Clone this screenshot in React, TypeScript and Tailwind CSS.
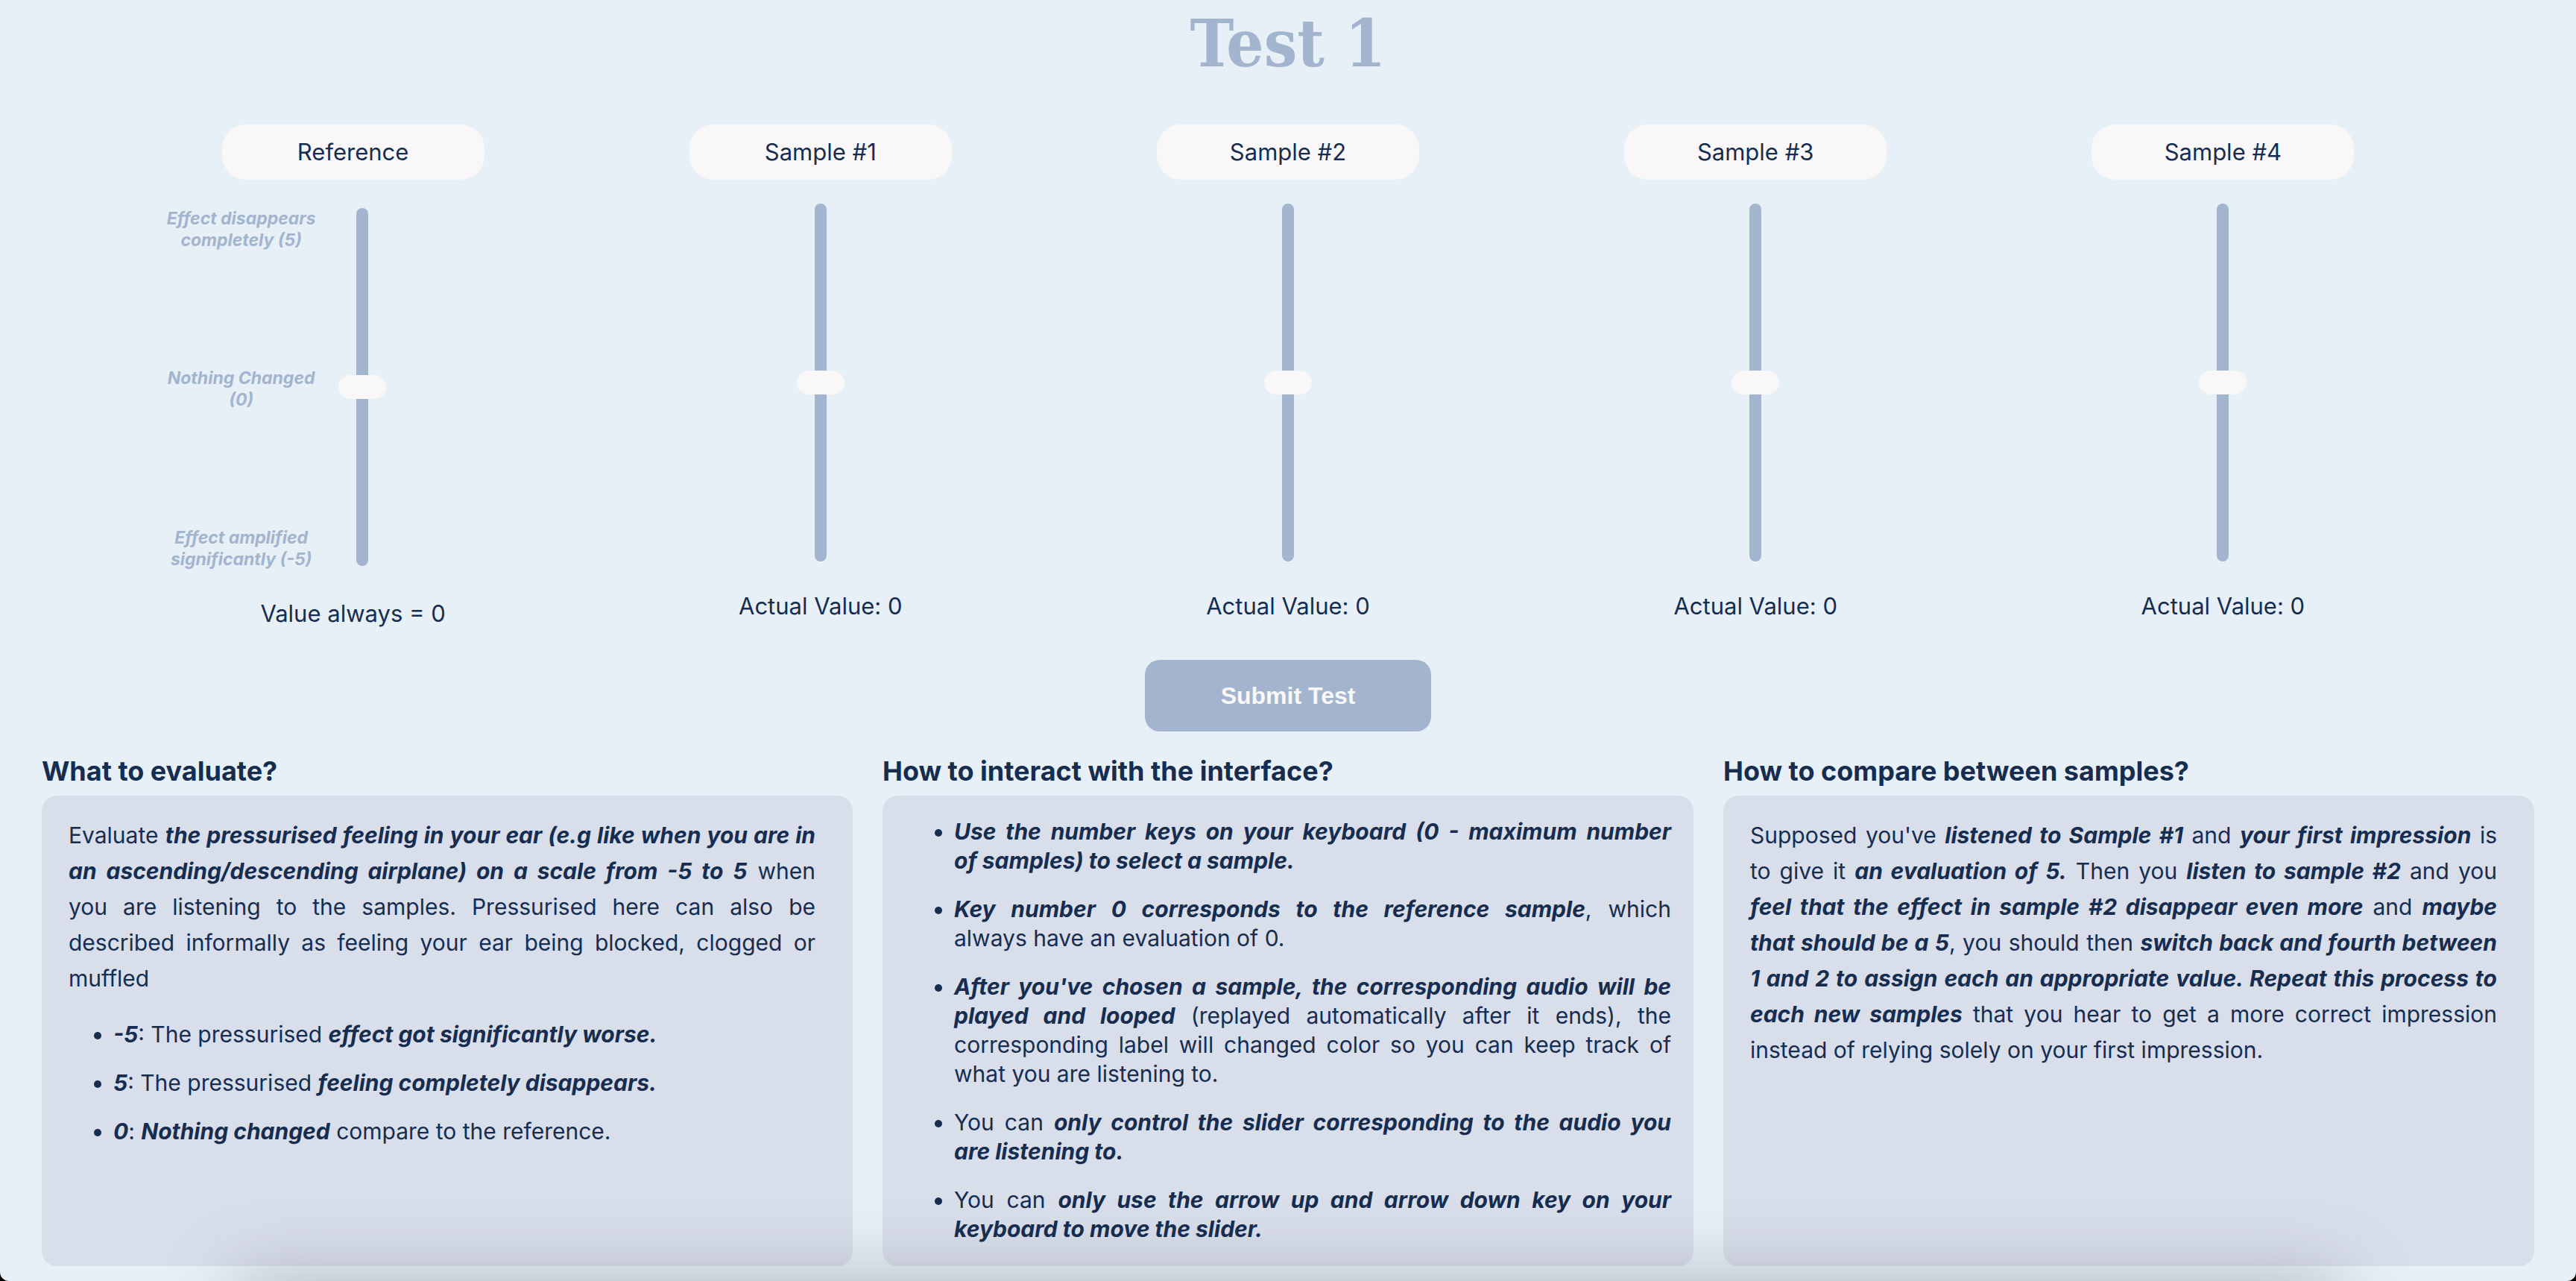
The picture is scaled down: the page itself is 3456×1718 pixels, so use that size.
import { useState, type ReactNode } from "react";

const FONT = "font-['Inter','Liberation_Sans',sans-serif]";

function B({ children }: { children: ReactNode }) {
  return <strong className="font-bold italic">{children}</strong>;
}

function VerticalSlider({
  id,
  value,
  readOnly,
  onChange,
}: {
  id: string;
  value: number;
  readOnly?: boolean;
  onChange?: (value: number) => void;
}) {
  return (
    <input
      id={id}
      type="range"
      min={-5}
      max={5}
      step={1}
      value={value}
      readOnly={readOnly}
      onChange={(e) => onChange?.(Number(e.target.value))}
      className="block h-[480px] w-16 appearance-none bg-transparent [direction:rtl] [writing-mode:vertical-lr] [&::-webkit-slider-runnable-track]:mx-auto [&::-webkit-slider-runnable-track]:h-full [&::-webkit-slider-runnable-track]:w-4 [&::-webkit-slider-runnable-track]:rounded-full [&::-webkit-slider-runnable-track]:bg-[#a3b4ce] [&::-webkit-slider-thumb]:-ml-6 [&::-webkit-slider-thumb]:h-8 [&::-webkit-slider-thumb]:w-16 [&::-webkit-slider-thumb]:appearance-none [&::-webkit-slider-thumb]:rounded-full [&::-webkit-slider-thumb]:bg-[#f9f7f8]"
    />
  );
}

function Pill({ htmlFor, children }: { htmlFor: string; children: ReactNode }) {
  return (
    <label
      htmlFor={htmlFor}
      className="flex h-[74px] w-[352px] items-center justify-center rounded-[32px] bg-[#f9f7f8] text-[31px] leading-10"
    >
      {children}
    </label>
  );
}

function ReferenceColumn() {
  return (
    <div className="flex flex-col items-center">
      <Pill htmlFor="reference">Reference</Pill>
      <div className="mt-[38px] flex gap-7 pr-[208px]">
        <div className="flex h-[486px] w-[204px] flex-col justify-between text-center text-[23px] leading-[29px] font-bold text-[#a3b4ce] italic">
          <p>
            Effect disappears
            <br />
            completely (5)
          </p>
          <p>
            Nothing Changed
            <br />
            (0)
          </p>
          <p>
            Effect amplified
            <br />
            significantly (-5)
          </p>
        </div>
        <VerticalSlider id="reference" value={0} readOnly />
      </div>
      <p className="mt-[38px] text-[31px] leading-10">Value always = 0</p>
    </div>
  );
}

function SampleColumn({ index }: { index: number }) {
  const [value, setValue] = useState(0);
  const id = `sample-${index}`;
  return (
    <div className="flex flex-col items-center">
      <Pill htmlFor={id}>Sample #{index}</Pill>
      <div className="mt-8">
        <VerticalSlider id={id} value={value} onChange={setValue} />
      </div>
      <p className="mt-10 text-[31px] leading-10">Actual Value: {value}</p>
    </div>
  );
}

function Card({ title, children }: { title: string; children: ReactNode }) {
  return (
    <section className="flex flex-col">
      <h3 className="text-[36px] leading-[46px] font-bold">{title}</h3>
      <div className="mt-[10px] grow rounded-[20px] bg-[#d8deea] text-justify text-[30px]">{children}</div>
    </section>
  );
}

export default function App() {
  return (
    <div className="bg-black">
      <main
        className={`relative flex min-h-screen flex-col overflow-hidden rounded-b-[12px] bg-[#e7f0f7] pb-5 text-[#162d50] ${FONT}`}
      >
        <h1 className="pt-1 text-center font-['DejaVu_Serif_Condensed','DejaVu_Serif',serif] text-[88px] leading-[108px] font-bold text-[#a3b4ce]">
          Test 1
        </h1>

        <div className="mt-[55px] grid grid-cols-5 px-40">
          <ReferenceColumn />
          {[1, 2, 3, 4].map((n) => (
            <SampleColumn key={n} index={n} />
          ))}
        </div>

        <button
          type="button"
          className="mx-auto mt-[42px] h-24 w-96 rounded-[20px] bg-[#a3b4ce] font-['Liberation_Sans',sans-serif] text-[32px] font-bold text-[#f9f7f8]"
        >
          Submit Test
        </button>

        <div className="mt-[30px] grid grow grid-cols-3 gap-10 px-14">
          <Card title="What to evaluate?">
            <p className="pt-[29px] pr-[50px] pl-9 leading-[48px]">
              Evaluate{" "}
              <B>
                the pressurised feeling in your ear (e.g like when you are in an ascending/descending airplane) on a
                scale from -5 to 5
              </B>{" "}
              when you are listening to the samples. Pressurised here can also be described informally as feeling your
              ear being blocked, clogged or muffled
            </p>
            <ul className="mt-8 list-disc space-y-[26px] pl-24 leading-[39px]">
              <li>
                <B>-5</B>: The pressurised <B>effect got significantly worse.</B>
              </li>
              <li>
                <B>5</B>: The pressurised <B>feeling completely disappears.</B>
              </li>
              <li>
                <B>0</B>: <B>Nothing changed</B> compare to the reference.
              </li>
            </ul>
          </Card>

          <Card title="How to interact with the interface?">
            <ul className="list-disc space-y-[26px] pt-[29px] pr-[30px] pl-24 leading-[39px]">
              <li>
                <B>Use the number keys on your keyboard (0 - maximum number of&nbsp;samples) to select a sample.</B>
              </li>
              <li>
                <B>Key number 0 corresponds to the reference sample</B>, which always&nbsp;have an evaluation of 0.
              </li>
              <li>
                <B>After you've chosen a sample, the corresponding audio will be played and looped</B> (replayed
                automatically after it ends), the corresponding label will changed color so you can keep track of what
                you are listening to.
              </li>
              <li>
                You can <B>only control the slider corresponding to the audio you are&nbsp;listening to.</B>
              </li>
              <li>
                You can <B>only use the arrow up and arrow down key on your keyboard to move the slider.</B>
              </li>
            </ul>
          </Card>

          <Card title="How to compare between samples?">
            <p className="pt-[29px] pr-[50px] pl-9 leading-[48px]">
              Supposed you've <B>listened to Sample #1</B> and <B>your first impression</B> is to give it{" "}
              <B>an evaluation of 5.</B> Then you <B>listen to sample #2</B> and you{" "}
              <B>feel that the effect in sample #2 disappear even more</B> and <B>maybe that should be a 5</B>, you
              should then{" "}
              <B>
                switch back and fourth between 1 and 2 to assign each an appropriate value. Repeat this process to each
                new samples
              </B>{" "}
              that you hear to get a more correct impression instead of relying solely on your first impression.
            </p>
          </Card>
        </div>

        {/* Soft shade rising from below the window's bottom edge */}
        <div className="pointer-events-none absolute inset-x-[320px] top-full h-40 shadow-[0_0_100px_rgba(70,75,80,0.35)]" />
      </main>
    </div>
  );
}
